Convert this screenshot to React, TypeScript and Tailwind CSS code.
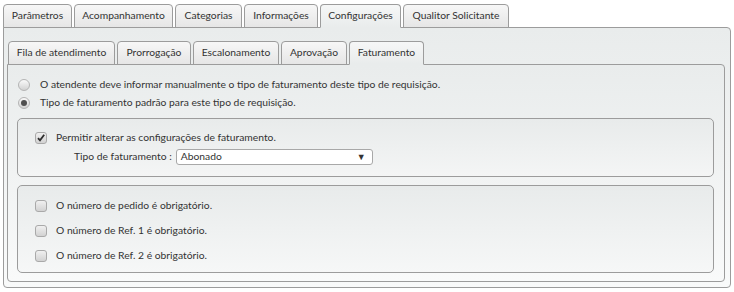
import React from "react";

const outerTabs = [
  { label: "Parâmetros", w: "w-[69px]" },
  { label: "Acompanhamento", w: "w-[99px]" },
  { label: "Categorias", w: "w-[67px]" },
  { label: "Informações", w: "w-[74px]" },
  { label: "Configurações", w: "w-[81px]", active: true },
  { label: "Qualitor Solicitante", w: "w-[106px]" },
];

const subTabs = [
  { label: "Fila de atendimento", w: "w-[107px]" },
  { label: "Prorrogação", w: "w-[74px]" },
  { label: "Escalonamento", w: "w-[86px]" },
  { label: "Aprovação", w: "w-[66px]" },
  { label: "Faturamento", w: "w-[75px]", active: true },
];

function Tab({ label, w, active }: { label: string; w: string; active?: boolean }) {
  return (
    <div
      className={
        active
          ? `${w} h-[24px] flex items-center justify-center rounded-t-[4px] border border-[#9c9c9c] border-b-[#e9ecec] bg-gradient-to-b from-[#f6f7f7] to-[#e9ecec]`
          : `${w} h-[24px] flex items-center justify-center rounded-t-[4px] border border-[#9c9c9c] bg-gradient-to-b from-[#f7f7f7] to-[#e6e6e6]`
      }
    >
      {label}
    </div>
  );
}

function Radio({ checked }: { checked?: boolean }) {
  return (
    <span className="w-[12px] h-[12px] rounded-full border border-[#b4b4b4] bg-gradient-to-b from-[#fafafa] to-[#d2d2d2] flex items-center justify-center shrink-0">
      {checked && <span className="w-[6px] h-[6px] rounded-full bg-[#505050]" />}
    </span>
  );
}

function Checkbox({ checked }: { checked?: boolean }) {
  return (
    <span className="w-[12px] h-[12px] rounded-[3px] border border-[#a9a9a9] bg-gradient-to-b from-[#f0f0f0] to-[#d2d2d2] flex items-center justify-center shrink-0">
      {checked && (
        <svg width="10" height="10" viewBox="0 0 10 10">
          <path d="M2 5.2 L4 7.4 L8.2 1.8" fill="none" stroke="#2e2e2e" strokeWidth="1.8" />
        </svg>
      )}
    </span>
  );
}

export default function App() {
  return (
    <div className="w-[734px] h-[292px] bg-white pt-[4px] pl-[3px] text-[10.3px] text-[#333] font-['Lato','Liberation_Sans',sans-serif]">
      <div className="w-[728px]">
        {/* abas principais */}
        <div className="relative z-10 flex gap-[2px] -mb-px">
          {outerTabs.map((t) => (
            <Tab key={t.label} {...t} />
          ))}
        </div>
        <div className="h-[261px] border border-[#9c9c9c] rounded-b-[4px] rounded-tr-[4px] bg-gradient-to-b from-[#e9ecec] to-[#f9fafa] pt-[13px] pl-[3px] pr-[5px]">
          {/* sub-abas */}
          <div className="relative z-10 flex gap-[2px] -mb-px pl-px">
            {subTabs.map((t) => (
              <Tab key={t.label} {...t} />
            ))}
          </div>
          <div className="h-[218px] border border-[#9c9c9c] rounded-[4px] rounded-tl-none bg-gradient-to-b from-[#e9ecec] to-[#f9fafa] pt-[11px] pl-[9px] pr-[10px]">
            <div className="h-[18px] flex items-center gap-[10px] pl-[1px]">
              <Radio />
              <span>O atendente deve informar manualmente o tipo de faturamento deste tipo de requisição.</span>
            </div>
            <div className="h-[18px] flex items-center gap-[10px] pl-[1px]">
              <Radio checked />
              <span>Tipo de faturamento padrão para este tipo de requisição.</span>
            </div>

            <div className="mt-[6px] h-[59px] border border-[#9c9c9c] rounded-[5px] bg-gradient-to-b from-[#e8ebeb] to-[#f4f5f5] pt-[10px] pl-[17px]">
              <div className="h-[18px] flex items-center gap-[9px]">
                <Checkbox checked />
                <span>Permitir alterar as configurações de faturamento.</span>
              </div>
              <div className="mt-px h-[18px] flex items-center pl-[39px] gap-[4px]">
                <span>Tipo de faturamento :</span>
                <div className="w-[197px] h-[16px] bg-white border border-[#a8a8a8] rounded-[3px] flex items-center justify-between pl-[4px] pr-[6px]">
                  <span>Abonado</span>
                  <span className="text-[9px] text-[#333]">▼</span>
                </div>
              </div>
            </div>

            <div className="mt-[8px] h-[88px] border border-[#9c9c9c] rounded-[5px] bg-gradient-to-b from-[#e8ebeb] to-[#f6f7f7] pt-[7px] pl-[17px]">
              {["O número de pedido é obrigatório.", "O número de Ref. 1 é obrigatório.", "O número de Ref. 2 é obrigatório."].map((t) => (
                <div key={t} className="h-[25px] flex items-center gap-[9px]">
                  <Checkbox />
                  <span>{t}</span>
                </div>
              ))}
            </div>
          </div>
        </div>
      </div>
    </div>
  );
}
